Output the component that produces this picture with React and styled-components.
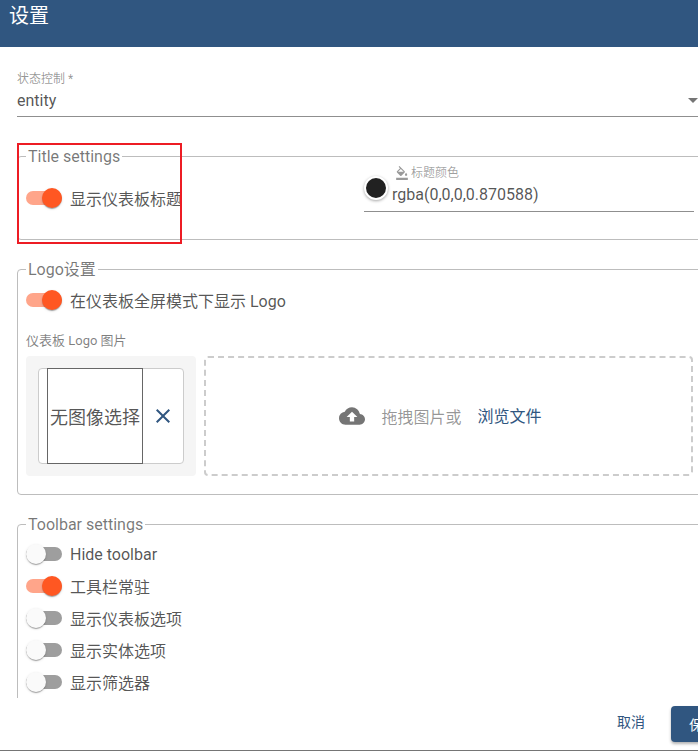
import React from 'react'
import styled, { createGlobalStyle } from 'styled-components'
import { MdClose, MdCloudUpload, MdFormatColorFill } from 'react-icons/md'

const GlobalStyle = createGlobalStyle`
  html, body { margin: 0; padding: 0; background: #fff; }
  body { font-family: Roboto, "Noto Sans CJK SC", sans-serif; color: rgba(0,0,0,.68); }
`

const Page = styled.div`
  width: 698px;
  height: 751px;
  display: flex;
  flex-direction: column;
  overflow: hidden;
  position: relative;
`
const Header = styled.header`
  height: 47px;
  flex: none;
  background: #305680;
  color: #fff;
  font-size: 20px;
  line-height: 32px;
  padding-left: 9px;
`
const Content = styled.main`
  flex: 1;
  min-height: 0;
  overflow: hidden;
  padding: 25px 0 0 17px;
`
const SelectField = styled.div`
  height: 44px;
  border-bottom: 1px solid #8f8f8f;
  position: relative;
`
const SelectLabel = styled.div`
  font-size: 12px;
  line-height: 14px;
  color: rgba(0,0,0,.42);
`
const SelectValue = styled.div`
  font-size: 16px;
  line-height: 20px;
  margin-top: 5px;
`
const Arrow = styled.span`
  position: absolute;
  right: 0;
  top: 26px;
  border-left: 5px solid transparent;
  border-right: 5px solid transparent;
  border-top: 5px solid #757575;
`
const Group = styled.fieldset`
  margin: ${p => p.$top}px -30px 0 0;
  padding: 0 0 ${p => p.$bottom}px 8px;
  border: 1px solid #bdbdbd;
  border-radius: 4px;
  min-width: 0;
`
const Legend = styled.legend`
  padding: 0 2px;
  font-size: 16px;
  line-height: 18px;
  color: rgba(0,0,0,.54);
  span { position: relative; top: 1px; }
`
const TitleRow = styled.div`
  display: flex;
`
const SwitchRow = styled.div`
  display: flex;
  align-items: center;
  height: ${p => p.$height || 32}px;
  gap: 8px;
  font-size: 16px;
  white-space: nowrap;
`
const SwitchList = styled.div`
  margin-top: ${p => p.$top}px;
`
const Track = styled.span`
  width: 36px;
  height: 14px;
  border-radius: 7px;
  position: relative;
  flex: none;
  background: ${p => (p.$on ? '#ffa58a' : '#9e9e9e')};
`
const Thumb = styled.span`
  position: absolute;
  top: -3px;
  left: ${p => (p.$on ? 16 : 0)}px;
  width: 20px;
  height: 20px;
  border-radius: 50%;
  background: ${p => (p.$on ? '#ff5722' : '#fafafa')};
  box-shadow: 0 2px 1px -1px rgba(0,0,0,.2), 0 1px 1px rgba(0,0,0,.14), 0 1px 3px rgba(0,0,0,.12);
`
const ColorField = styled.div`
  margin-left: 182px;
  width: 330px;
  height: 46px;
  margin-top: 1px;
  border-bottom: 1px solid #8f8f8f;
  position: relative;
  padding-left: 28px;
  box-sizing: border-box;
`
const Swatch = styled.span`
  position: absolute;
  left: 0;
  top: 10px;
  width: 20px;
  height: 20px;
  border-radius: 50%;
  background: #212121;
  border: 2px solid #fff;
  box-shadow: 0 1px 3px rgba(0,0,0,.35);
`
const ColorLabel = styled.div`
  display: flex;
  align-items: center;
  gap: 2px;
  margin-left: 3px;
  font-size: 12px;
  line-height: 14px;
  color: rgba(0,0,0,.38);
  svg { color: #9a9a9a; }
`
const ColorValue = styled.div`
  font-size: 16px;
  line-height: 20px;
  margin-top: 5px;
`
const SmallLabel = styled.div`
  font-size: 13px;
  line-height: 14px;
  margin-top: 18px;
  color: rgba(0,0,0,.5);
`
const LogoRow = styled.div`
  display: flex;
  gap: 8px;
  margin-top: 8px;
`
const PreviewPane = styled.div`
  width: 170px;
  height: 120px;
  background: #f5f5f5;
  border-radius: 4px;
  padding: 12px;
  box-sizing: border-box;
`
const PreviewCard = styled.div`
  height: 96px;
  background: #fff;
  border: 1px solid #ccc;
  border-radius: 4px;
  box-sizing: border-box;
  display: flex;
  align-items: center;
  padding-left: 8px;
`
const NoImage = styled.div`
  width: 96px;
  height: 96px;
  flex: none;
  box-sizing: border-box;
  border: 1px solid #666;
  display: flex;
  align-items: center;
  justify-content: center;
  font-size: 18px;
  white-space: nowrap;
`
const ClearButton = styled.span`
  display: flex;
  margin-left: 8px;
  color: #305680;
`
const DropZone = styled.div`
  width: 489px;
  height: 120px;
  box-sizing: border-box;
  border: 2px dashed #ccc;
  border-radius: 4px;
  padding-right: 16px;
  display: flex;
  align-items: center;
  justify-content: center;
  font-size: 16px;
  color: rgba(0,0,0,.42);
  svg { color: #757575; margin-right: 16px; }
`
const BrowseLink = styled.span`
  color: #305680;
  margin: 0 0 3px 16px;
`
const Footer = styled.footer`
  height: 53px;
  flex: none;
  display: flex;
  align-items: center;
  justify-content: flex-end;
  gap: 26px;
  box-sizing: border-box;
  margin-right: -37px;
  border-bottom: 1px solid #757575;
  font-size: 14px;
`
const CancelButton = styled.span`
  color: #305680;
  margin-bottom: 6px;
`
const SaveButton = styled.span`
  width: 64px;
  height: 36px;
  display: flex;
  align-items: center;
  justify-content: center;
  background: #305680;
  color: #fff;
  border-radius: 4px;
  box-shadow: 0 2px 3px rgba(0,0,0,.3);
`
const Highlight = styled.div`
  position: absolute;
  left: 17px;
  top: 143px;
  width: 161px;
  height: 97px;
  border: 2px solid #ed1c24;
`

const Switch = ({ on, children, height }) => (
  <SwitchRow $height={height}>
    <Track $on={on}><Thumb $on={on} /></Track>
    {children}
  </SwitchRow>
)

export default function App() {
  return (
    <Page>
      <GlobalStyle />
      <Header>设置</Header>
      <Content>
        <SelectField>
          <SelectLabel>状态控制 *</SelectLabel>
          <SelectValue>entity</SelectValue>
          <Arrow />
        </SelectField>
        <Group $top={30} $bottom={8}>
          <Legend><span>Title settings</span></Legend>
          <TitleRow>
            <div>
              <Switch on height={66}>显示仪表板标题</Switch>
            </div>
            <ColorField>
              <Swatch />
              <ColorLabel><MdFormatColorFill size={14} />标题颜色</ColorLabel>
              <ColorValue>rgba(0,0,0,0.870588)</ColorValue>
            </ColorField>
          </TitleRow>
        </Group>
        <Group $top={20} $bottom={18}>
          <Legend><span>Logo设置</span></Legend>
          <SwitchList $top={6}>
            <Switch on>在仪表板全屏模式下显示 Logo</Switch>
          </SwitchList>
          <SmallLabel>仪表板 Logo 图片</SmallLabel>
          <LogoRow>
            <PreviewPane>
              <PreviewCard>
                <NoImage>无图像选择</NoImage>
                <ClearButton><MdClose size={24} /></ClearButton>
              </PreviewCard>
            </PreviewPane>
            <DropZone>
              <MdCloudUpload size={26} />
              拖拽图片或
              <BrowseLink>浏览文件</BrowseLink>
            </DropZone>
          </LogoRow>
        </Group>
        <Group $top={20} $bottom={20}>
          <Legend><span>Toolbar settings</span></Legend>
          <SwitchList $top={5}>
            <Switch>Hide toolbar</Switch>
            <Switch on>工具栏常驻</Switch>
            <Switch>显示仪表板选项</Switch>
            <Switch>显示实体选项</Switch>
            <Switch>显示筛选器</Switch>
          </SwitchList>
        </Group>
      </Content>
      <Footer>
        <CancelButton>取消</CancelButton>
        <SaveButton>保存</SaveButton>
      </Footer>
      <Highlight />
    </Page>
  )
}
